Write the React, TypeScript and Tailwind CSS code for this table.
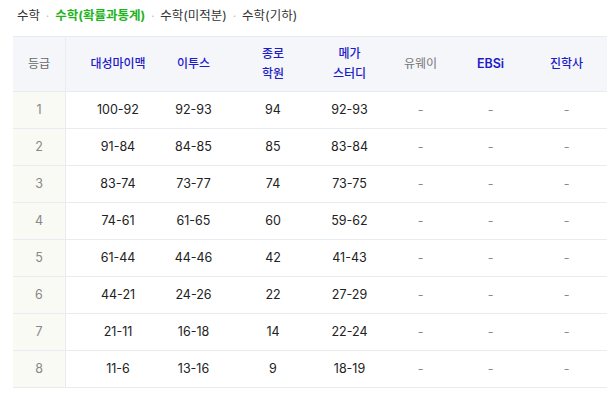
const COLS = 'grid grid-cols-[53px_88px_79px_80px_73px_69px_71px_81px]';

const ROWS: Array<[string, string, string, string, string]> = [
  ['1', '100-92', '92-93', '94', '92-93'],
  ['2', '91-84', '84-85', '85', '83-84'],
  ['3', '83-74', '73-77', '74', '73-75'],
  ['4', '74-61', '61-65', '60', '59-62'],
  ['5', '61-44', '44-46', '42', '41-43'],
  ['6', '44-21', '24-26', '22', '27-29'],
  ['7', '21-11', '16-18', '14', '22-24'],
  ['8', '11-6', '13-16', '9', '18-19'],
];

function Sep() {
  return <span className="mx-[6px] text-[#bbb] text-[11px]">·</span>;
}

export default function App() {
  return (
    <div className="w-[609px] h-[396px] bg-white overflow-hidden font-['Inter','Noto_Sans_CJK_KR',sans-serif]">
      {/* tabs */}
      <div className="pl-[17px] pt-[5px] h-[26px] flex items-center text-[12.5px] leading-[20px] text-[#333]">
        <span>수학</span>
        <Sep />
        <span className="font-bold text-[#1eb41e]">수학(확률과통계)</span>
        <Sep />
        <span>수학(미적분)</span>
        <Sep />
        <span>수학(기하)</span>
      </div>

      <div className="ml-[13px] mt-[10px] w-[594px] text-[12.5px]">
        {/* header */}
        <div className={`${COLS} h-[56px] bg-[#f5f6fa] border-y border-[#e8ebf2] leading-[20px] text-[12px]`}>
          <div className="flex items-center justify-center text-[#666] border-r border-[#e8ebf2]">등급</div>
          <div className="flex items-center justify-center pl-4 text-[#1c1cc8] font-medium">대성마이맥</div>
          <div className="flex items-center justify-center text-[#1c1cc8] font-medium">이투스</div>
          <div className="flex items-center justify-center text-center text-[#1c1cc8] font-medium">
            종로<br />학원
          </div>
          <div className="flex items-center justify-center text-center text-[#1c1cc8] font-medium">
            메가<br />스터디
          </div>
          <div className="flex items-center justify-center text-[#777]">유웨이</div>
          <div className="flex items-center justify-center text-[#1c1cc8] font-semibold text-[12.5px]">EBSi</div>
          <div className="flex items-center justify-center text-[#1c1cc8] font-medium">진학사</div>
        </div>

        {/* body */}
        {ROWS.map((r) => (
          <div key={r[0]} className={`${COLS} h-[37px] border-b border-[#e8ebf2]`}>
            <div className="flex items-center justify-center bg-[#f9faf4] text-[#888] border-r border-[#e8ebf2]">{r[0]}</div>
            <div className="flex items-center justify-center pl-4 text-[#222]">{r[1]}</div>
            <div className="flex items-center justify-center text-[#222]">{r[2]}</div>
            <div className="flex items-center justify-center text-[#222]">{r[3]}</div>
            <div className="flex items-center justify-center text-[#222]">{r[4]}</div>
            <div className="flex items-center justify-center text-[#888]">-</div>
            <div className="flex items-center justify-center text-[#888]">-</div>
            <div className="flex items-center justify-center text-[#888]">-</div>
          </div>
        ))}
      </div>
    </div>
  );
}
